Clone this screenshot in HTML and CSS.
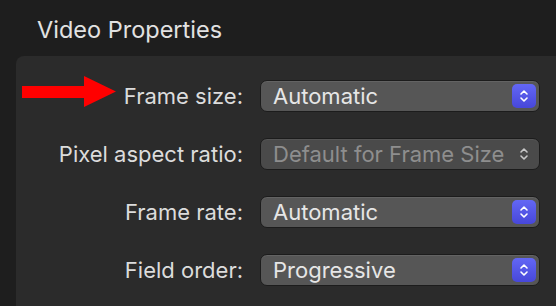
FILE: index.html
```html
<!DOCTYPE html>
<html>
<head>
<meta charset="utf-8">
<link rel="stylesheet" href="styles.css">
</head>
<body>
<div class="header">Video Properties</div>
<div class="panel">
  <svg class="arrow" width="96" height="32" viewBox="0 0 96 32"><path d="M0 10H62V0L94 15.5L62 31V22H0Z" fill="#ff0000"/></svg>
  <div class="grid">
    <div class="label">Frame size:</div>
    <div class="popup"><span class="val">Automatic</span><span class="btn"><svg width="12" height="16" viewBox="0 0 12 16"><path d="M3 6L6 3L9 6M3 10L6 13L9 10" fill="none" stroke="#fff" stroke-width="1.6" stroke-linecap="round" stroke-linejoin="round"/></svg></span></div>
    <div class="label">Pixel aspect ratio:</div>
    <div class="popup disabled"><span class="val">Default for Frame Size</span><span class="btn plain"><svg width="12" height="16" viewBox="0 0 12 16"><path d="M3 6L6 3L9 6M3 10L6 13L9 10" fill="none" stroke="#c8c8c8" stroke-width="1.6" stroke-linecap="round" stroke-linejoin="round"/></svg></span></div>
    <div class="label">Frame rate:</div>
    <div class="popup"><span class="val">Automatic</span><span class="btn"><svg width="12" height="16" viewBox="0 0 12 16"><path d="M3 6L6 3L9 6M3 10L6 13L9 10" fill="none" stroke="#fff" stroke-width="1.6" stroke-linecap="round" stroke-linejoin="round"/></svg></span></div>
    <div class="label">Field order:</div>
    <div class="popup"><span class="val">Progressive</span><span class="btn"><svg width="12" height="16" viewBox="0 0 12 16"><path d="M3 6L6 3L9 6M3 10L6 13L9 10" fill="none" stroke="#fff" stroke-width="1.6" stroke-linecap="round" stroke-linejoin="round"/></svg></span></div>
  </div>
</div>
</body>
</html>
```
FILE: styles.css
```css
html, body {
  margin: 0;
  height: 100%;
}
body {
  background: #1e1e1e;
  font-family: Inter, "Noto Sans", sans-serif;
  color: #dedede;
  display: flex;
  flex-direction: column;
  overflow: hidden;
}
.header {
  height: 56px;
  box-sizing: border-box;
  padding: 16px 0 0 37px;
  font-size: 23.5px;
  line-height: 28px;
  color: #e2e2e2;
}
.panel {
  position: relative;
  flex: 1;
  margin-left: 16px;
  background: #2b2b2b;
  border-top-left-radius: 8px;
  padding-top: 24px;
}
.arrow {
  position: absolute;
  left: 6px;
  top: 20px;
}
.grid {
  display: grid;
  grid-template-columns: 227px 280px;
  column-gap: 17px;
  row-gap: 26px;
  align-items: center;
}
.label {
  text-align: right;
  font-size: 22px;
  line-height: 28px;
  color: #dcdcdc;
}
.popup {
  height: 32px;
  box-sizing: border-box;
  border-radius: 7px;
  background: #565656;
  border: 1px solid #1c1c1c;
  box-shadow: inset 0 1px 0 #636363;
  display: flex;
  align-items: center;
  justify-content: space-between;
  padding: 0 3px 0 12px;
}
.val {
  font-size: 22px;
  line-height: 28px;
  color: #e6e6e6;
}
.disabled {
  background: #4a4a4a;
  box-shadow: inset 0 1px 0 #555;
}
.disabled .val {
  color: #8e8e8e;
}
.btn {
  width: 24px;
  height: 24px;
  border-radius: 5px;
  background: linear-gradient(#6367f5, #4747d9);
  display: flex;
  align-items: center;
  justify-content: center;
}
.btn.plain {
  background: none;
}
```
